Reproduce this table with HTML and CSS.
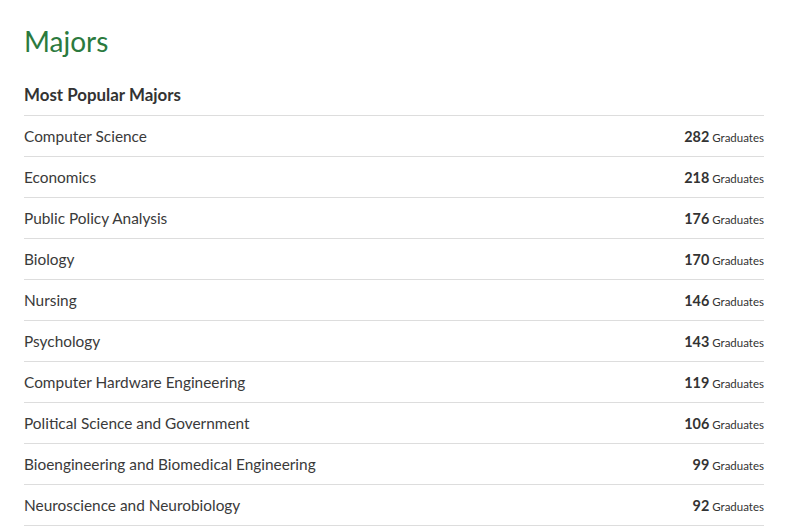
FILE: index.html
```html
<!DOCTYPE html>
<html>
<head>
<meta charset="utf-8">
<link rel="stylesheet" href="styles.css">
</head>
<body>
<main class="page">
  <h1 class="title">Majors</h1>
  <h2 class="subtitle">Most Popular Majors</h2>
  <ul class="list">
    <li class="row"><span class="name">Computer Science</span><span class="count"><b>282</b> Graduates</span></li>
    <li class="row"><span class="name">Economics</span><span class="count"><b>218</b> Graduates</span></li>
    <li class="row"><span class="name">Public Policy Analysis</span><span class="count"><b>176</b> Graduates</span></li>
    <li class="row"><span class="name">Biology</span><span class="count"><b>170</b> Graduates</span></li>
    <li class="row"><span class="name">Nursing</span><span class="count"><b>146</b> Graduates</span></li>
    <li class="row"><span class="name">Psychology</span><span class="count"><b>143</b> Graduates</span></li>
    <li class="row"><span class="name">Computer Hardware Engineering</span><span class="count"><b>119</b> Graduates</span></li>
    <li class="row"><span class="name">Political Science and Government</span><span class="count"><b>106</b> Graduates</span></li>
    <li class="row"><span class="name">Bioengineering and Biomedical Engineering</span><span class="count"><b>99</b> Graduates</span></li>
    <li class="row"><span class="name">Neuroscience and Neurobiology</span><span class="count"><b>92</b> Graduates</span></li>
  </ul>
</main>
</body>
</html>
```
FILE: styles.css
```css
html, body {
  margin: 0;
  padding: 0;
  background: #fff;
}
body {
  font-family: Lato, "Liberation Sans", sans-serif;
  color: #333;
}
.page {
  padding: 22px 21px 0 24px;
}
.title {
  margin: 0;
  font-size: 28px;
  font-weight: 400;
  line-height: 38px;
  color: #2b7a3e;
}
.subtitle {
  margin: 25px 0 0;
  font-size: 16.9px;
  font-weight: 700;
  line-height: 20px;
  color: #333;
  padding-bottom: 10px;
}
.list {
  list-style: none;
  margin: 0;
  padding: 0;
}
.row {
  display: flex;
  justify-content: space-between;
  align-items: center;
  height: 40px;
  border-top: 1px solid #ddd;
}
.row:last-child {
  border-bottom: 1px solid #ddd;
}
.name {
  font-size: 15.4px;
  color: #3a3a3a;
}
.count {
  font-size: 11.5px;
  color: #333;
}
.count b {
  font-size: 14.4px;
  font-weight: 700;
}
```
